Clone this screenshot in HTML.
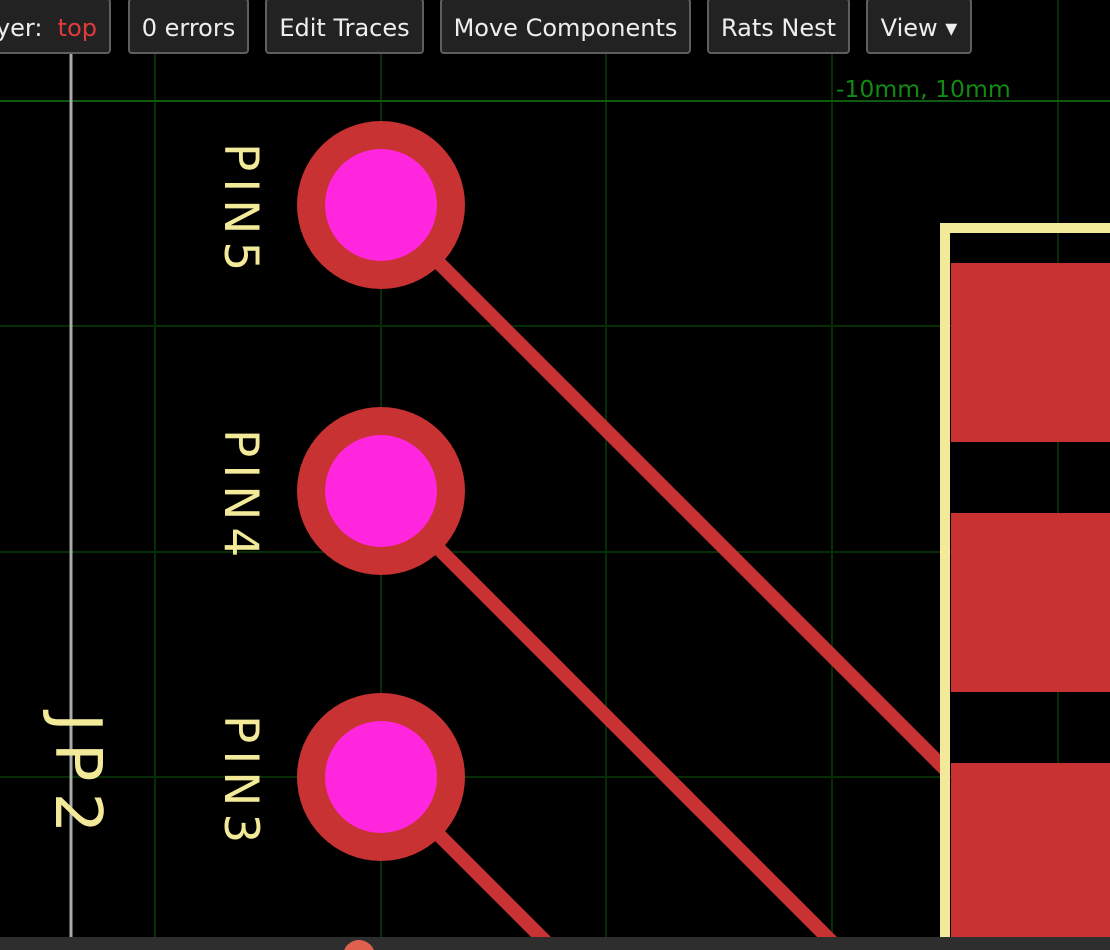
<!DOCTYPE html>
<html><head><meta charset="utf-8"><style>
html,body{margin:0;padding:0;background:#000;width:1110px;height:950px;overflow:hidden;font-family:"DejaVu Sans","Liberation Sans",sans-serif}
.btn{position:absolute;top:-2px;height:56px;box-sizing:border-box;background:#222;border:2px solid #5e5e5e;border-radius:4px;color:#eee;font-size:24px;line-height:56px;text-align:center;white-space:nowrap}
</style></head><body>
<svg width="1110" height="950" style="position:absolute;left:0;top:0" xmlns="http://www.w3.org/2000/svg">
<g stroke="#072d07" stroke-width="2">
<line x1="155" y1="0" x2="155" y2="950"/><line x1="381" y1="0" x2="381" y2="950"/>
<line x1="606" y1="0" x2="606" y2="950"/><line x1="832" y1="0" x2="832" y2="950"/>
<line x1="1058" y1="0" x2="1058" y2="950"/>
<line x1="0" y1="326" x2="1110" y2="326"/><line x1="0" y1="552" x2="1110" y2="552"/>
<line x1="0" y1="777" x2="1110" y2="777"/>
</g>
<line x1="0" y1="101" x2="1110" y2="101" stroke="#0e5a0e" stroke-width="2"/>
<text x="836" y="97" fill="#138a13" font-family="DejaVu Sans" font-size="23.5">-10mm, 10mm</text>
<line x1="71" y1="50" x2="71" y2="940" stroke="#aaa" stroke-width="3"/>
<g fill="#c83232">
<rect x="951" y="263" width="160" height="179"/>
<rect x="951" y="513" width="160" height="179"/>
<rect x="951" y="763" width="160" height="180"/>
</g>
<g stroke="#c83232" stroke-width="14">
<line x1="381" y1="205" x2="945" y2="769"/>
<line x1="381" y1="491" x2="835" y2="945"/>
<line x1="381" y1="777" x2="549" y2="945"/>
</g>
<path d="M945 950 V228 H1110" fill="none" stroke="#f2ea98" stroke-width="10"/>
<g fill="#c83232"><circle cx="381" cy="205" r="84"/><circle cx="381" cy="491" r="84"/><circle cx="381" cy="777" r="84"/></g>
<g fill="#ff26dd"><circle cx="381" cy="205" r="56"/><circle cx="381" cy="491" r="56"/><circle cx="381" cy="777" r="56"/></g>
<g fill="#f2ea98" font-family="DejaVu Sans" font-size="47" letter-spacing="7">
<text transform="translate(225,143) rotate(90)">PIN5</text>
<text transform="translate(225,429) rotate(90)">PIN4</text>
<text transform="translate(225,715) rotate(90)">PIN3</text>
<text transform="translate(56,713) rotate(90)" font-size="64" letter-spacing="11">JP2</text>
</g>
<rect x="0" y="937" width="1110" height="13" fill="#2e2e2e"/>
<circle cx="359" cy="956" r="16" fill="#e0604e"/>
</svg>
<div class="btn" style="left:-60px;width:171px;text-align:right;padding-right:12px">Layer:&nbsp; <span style="color:#e03a3a">top</span></div>
<div class="btn" style="left:128px;width:121px">0 errors</div>
<div class="btn" style="left:265px;width:159px">Edit Traces</div>
<div class="btn" style="left:440px;width:251px">Move Components</div>
<div class="btn" style="left:707px;width:143px">Rats Nest</div>
<div class="btn" style="left:866px;width:106px">View ▾</div>
</body></html>
